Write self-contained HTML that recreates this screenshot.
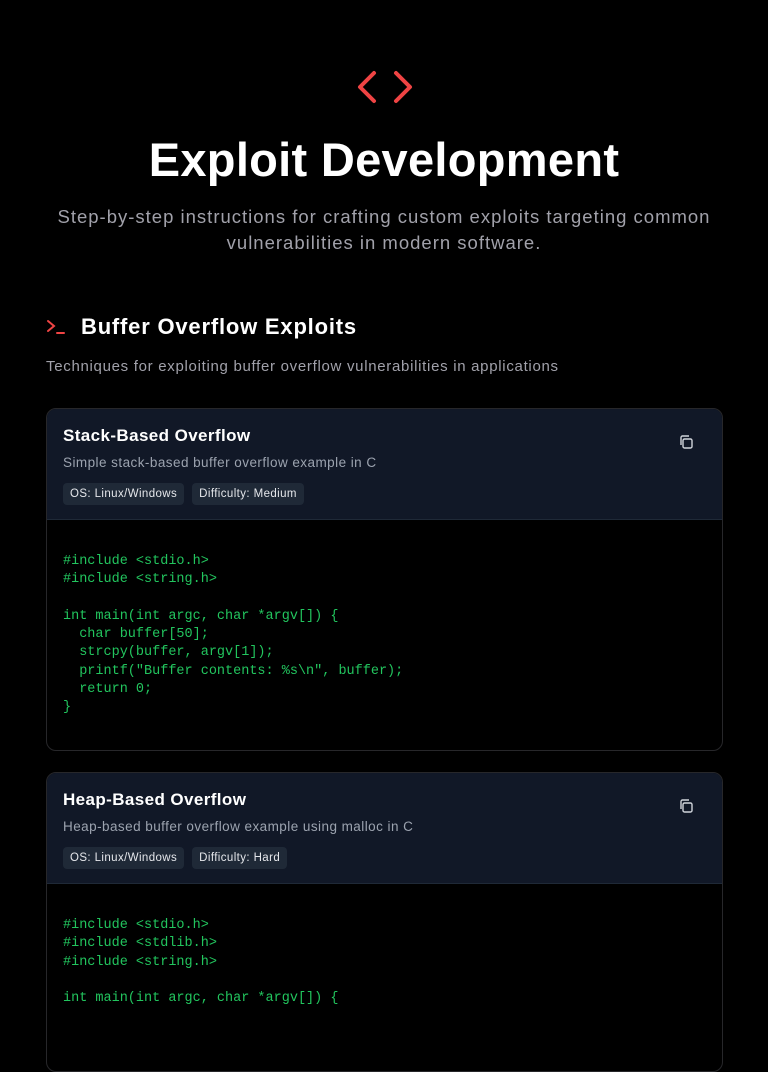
<!DOCTYPE html>
<html><head><meta charset="utf-8"><style>
*{box-sizing:border-box;margin:0;padding:0}
body{width:768px;height:1024px;overflow:hidden;background:#000;font-family:"Liberation Sans",sans-serif;color:#fff}
.icon{position:absolute;left:356px;top:70px}
h1{position:absolute;top:132px;left:0;width:768px;text-align:center;font-size:47px;font-weight:700;letter-spacing:0.3px}
.sub{position:absolute;top:204px;left:30px;width:708px;text-align:center;font-size:18.5px;line-height:26px;color:#a1a1aa;letter-spacing:1px}
.h2{position:absolute;top:314px;left:46px;font-size:22px;font-weight:700;display:flex;align-items:center;letter-spacing:0.8px}
.h2 svg{margin-right:15px}
.desc{position:absolute;top:358px;left:46px;font-size:15px;color:#a1a1aa;letter-spacing:0.7px}
.card{position:absolute;left:46px;width:677px;border:1px solid #27272a;border-radius:10px;overflow:hidden;background:#000}
.head{background:#111827;padding:17px 16px 0;height:111px;position:relative;border-bottom:1px solid #1f2937}
.head h3{font-size:17px;font-weight:700;letter-spacing:0.4px}
.head p{font-size:13.5px;color:#9ca3af;margin-top:9px;letter-spacing:0.45px}
.tags{margin-top:13px;display:flex;gap:8px}
.tag{background:#1f2937;color:#e5e7eb;font-size:11.5px;padding:5px 7px;border-radius:4px;letter-spacing:0.4px}
.copy{position:absolute;right:28px;top:25px}
pre{font-family:"Liberation Mono",monospace;font-size:13.5px;line-height:18.3px;color:#22c55e;padding:33px 16px}
</style></head><body>
<svg class="icon" width="58" height="36" viewBox="0 0 58 36" fill="none" stroke="#ef4444" stroke-width="4" stroke-linecap="round" stroke-linejoin="round"><path d="M18 3 4 17l14 14"/><path d="M40 3l14 14-14 14"/></svg>
<h1>Exploit Development</h1>
<div class="sub">Step-by-step instructions for crafting custom exploits targeting common vulnerabilities in modern software.</div>
<div class="h2"><svg width="20" height="18" viewBox="0 0 20 18" fill="none" stroke="#ef4444" stroke-width="2" stroke-linecap="round"><path d="M2 3l6 5-6 5"/><path d="M11 15h7"/></svg>Buffer Overflow Exploits</div>
<div class="desc">Techniques for exploiting buffer overflow vulnerabilities in applications</div>
<div class="card" style="top:408px;height:343px">
<div class="head"><h3>Stack-Based Overflow</h3><p>Simple stack-based buffer overflow example in C</p><div class="tags"><span class="tag">OS: Linux/Windows</span><span class="tag">Difficulty: Medium</span></div>
<svg class="copy" width="16" height="16" viewBox="0 0 16 16" fill="none" stroke="#d1d5db" stroke-width="1.4"><rect x="5" y="5" width="9" height="9" rx="1.5"/><path d="M3 11V3.5A1.5 1.5 0 0 1 4.5 2H11"/></svg></div>
<pre>#include &lt;stdio.h&gt;
#include &lt;string.h&gt;

int main(int argc, char *argv[]) {
  char buffer[50];
  strcpy(buffer, argv[1]);
  printf("Buffer contents: %s\n", buffer);
  return 0;
}</pre></div>
<div class="card" style="top:772px;height:300px">
<div class="head"><h3>Heap-Based Overflow</h3><p>Heap-based buffer overflow example using malloc in C</p><div class="tags"><span class="tag">OS: Linux/Windows</span><span class="tag">Difficulty: Hard</span></div>
<svg class="copy" width="16" height="16" viewBox="0 0 16 16" fill="none" stroke="#d1d5db" stroke-width="1.4"><rect x="5" y="5" width="9" height="9" rx="1.5"/><path d="M3 11V3.5A1.5 1.5 0 0 1 4.5 2H11"/></svg></div>
<pre>#include &lt;stdio.h&gt;
#include &lt;stdlib.h&gt;
#include &lt;string.h&gt;

int main(int argc, char *argv[]) {</pre></div>
</body></html>
